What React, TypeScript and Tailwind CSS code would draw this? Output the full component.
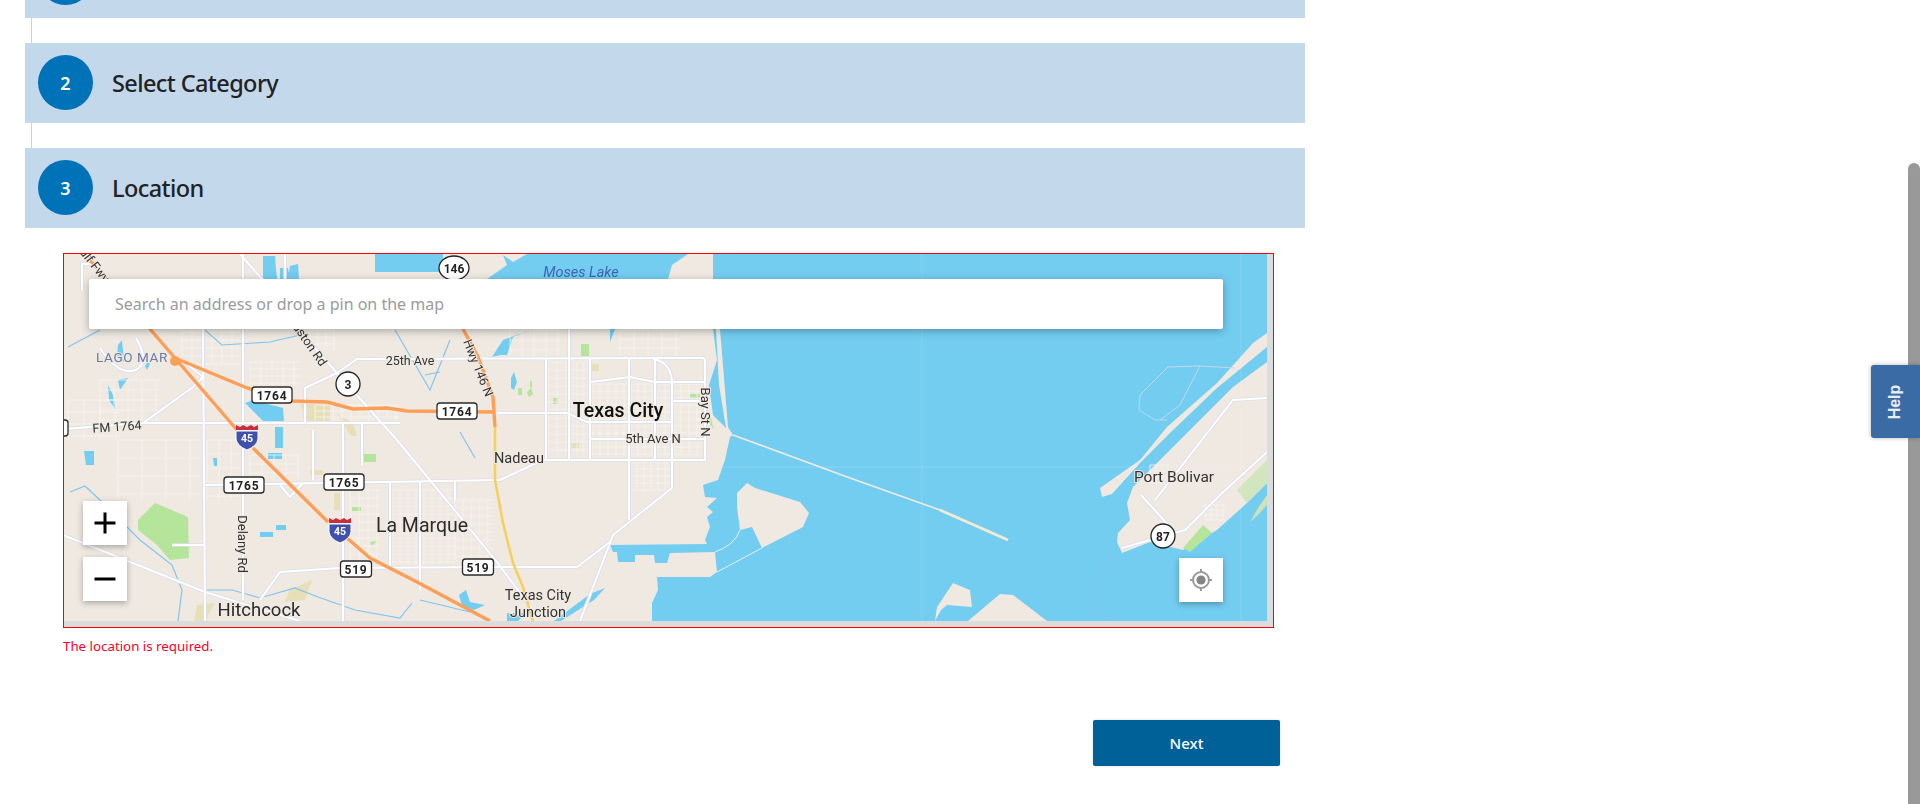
const land = "#efe9e2";
const water = "#73cdf1";

const waterShapes = [
  // bay, coast running top to bottom then along the right edge
  "M713 254 L713 278 L720 329 L725 390 L728 427 L733 435 L730 437 L725 460 L718 480 L703 485 L705 497 L717 498 L707 507 L713 512 L707 517 L710 527 L705 540 L707 544 L610 545 L613 552 L617 552 L618 562 L635 562 L635 555 L654 555 L655 563 L667 563 L670 553 L715 552 L717 572 L710 577 L657 577 L658 590 L652 603 L652 621 L1267 621 L1267 254 Z",
  // Moses Lake
  "M487 279 L507 265 L503 255 L513 262 L527 254 L688 254 L672 265 L668 279 Z",
  "M492 357 L503 340 L533 329 L513 337 L507 355 L500 355 Z",
  "M610 342 L615 329 L610 329 Z",
  "M713 329 L717 360 L709 385 L713 415 L726 428 L719 385 L716 329 Z",
  "M375 254 L443 254 L443 272 L375 272 Z",
  "M263 256 L275 256 L276 270 L278 285 L263 279 Z",
  "M280 268 L288 268 L290 279 L280 279 Z",
  "M290 266 L298 264 L299 279 L288 279 Z",
  "M245 403 L253 400 L283 408 L284 421 L263 421 Z",
  "M275 427 L283 427 L283 448 L275 448 Z",
  "M268 453 L282 453 L282 459 L268 459 Z",
  "M84 451 L94 451 L94 465 L86 465 Z",
  "M213 458 L217 458 L217 466 L214 466 Z",
  "M260 532 L273 532 L273 537 L260 537 Z",
  "M276 525 L286 525 L286 530 L276 530 Z",
  "M118 345 L122 340 L124 362 L117 358 Z",
  "M148 361 L150 364 L147 370 L145 366 Z",
  "M108 385 L113 395 L116 410 L109 400 Z",
  "M118 380 L128 378 L120 390 Z",
  "M459 595 L466 590 L470 602 L485 605 L474 610 L462 606 Z",
  "M605 588 L594 600 L561 621 L554 621 L590 594 Z",
  "M507 613 L527 613 L518 621 L507 621 Z",
  "M511 378 L514 372 L517 382 L514 390 L511 388 Z",
];

const landShapes = [
  "M737 493 L747 483 L755 488 L800 502 L809 513 L803 527 L762 548 L752 527 L740 530 L737 507 Z",
  "M1267 333 L1253 343 L1217 383 L1167 427 L1140 460 L1100 488 L1102 497 L1112 494 L1140 463 L1170 433 L1217 388 L1267 347 Z",
  "M1267 362 L1233 387 L1193 427 L1170 450 L1133 487 L1127 503 L1130 520 L1118 533 L1117 542 L1122 553 L1150 542 L1183 550 L1217 530 L1247 503 L1267 483 Z",
  "M935 621 L937 607 L953 583 L970 590 L972 607 L947 605 L941 610 Z",
  "M968 621 L1000 594 L1013 595 L1047 621 Z",
];

const greens = [
  "M138 520 L155 503 L188 517 L189 558 L170 560 L157 545 L138 530 Z",
  "M581 344 L589 344 L589 356 L581 356 Z",
  "M553 398 L558 398 L558 404 L553 404 Z",
  "M518 388 L522 388 L522 395 L518 395 Z",
  "M530 380 L532 382 L532 388 L530 387 Z",
  "M527 392 L531 388 L533 394 L529 397 Z",
  "M690 394 L700 394 L700 398 L690 398 Z",
  "M709 410 L714 430 L710 424 Z",
  "M363 454 L376 454 L376 462 L363 462 Z",
  "M352 507 L361 507 L361 511 L352 511 Z",
  "M370 542 L377 541 L372 546 Z",
  "M1183 548 L1203 525 L1212 533 L1190 552 Z",
];

const khaki = [
  "M300 404 L330 404 L330 421 L307 421 Z",
  "M337 414 L353 423 L357 436 L351 436 Z",
  "M334 493 L340 493 L340 510 L334 510 Z",
  "M290 590 L312 580 L305 600 L284 602 Z",
  "M197 605 L215 603 L205 621 L194 621 Z",
  "M591 364 L599 364 L599 371 L591 371 Z",
  "M571 443 L579 443 L579 448 L571 448 Z",
  "M310 470 L323 470 L323 475 L310 475 Z",
];

const roads = [
  "M203 329 L205 621",
  "M243 254 L243 600",
  "M63 429 L143 423 L193 387 L203 377 L180 358",
  "M63 535 L205 592 L300 621",
  "M337 373 L357 359 L703 358 Q705 358 705 362 L705 460 L543 460 L500 480 L205 485",
  "M298 329 L337 373 L397 440 L493 557 L533 610",
  "M280 485 L290 497 L303 483",
  "M497 413 L567 413 L587 422 L672 422",
  "M653 359 Q670 362 672 380 L672 488 L613 535 L580 621",
  "M590 358 L590 460",
  "M569 329 L569 460",
  "M546 358 L546 460",
  "M629 358 L629 520",
  "M655 358 L655 460",
  "M590 382 L630 377 L655 382 L705 382",
  "M672 401 L705 401",
  "M590 439 L705 439",
  "M260 600 L280 572 L340 568 L500 567 L577 567 L610 542",
  "M343 423 L343 621",
  "M143 423 L400 423",
  "M313 430 L313 480",
  "M362 423 L362 465",
  "M390 483 L390 568",
  "M420 481 L420 590",
  "M455 480 L455 500",
  "M305 388 L305 423",
  "M305 388 L337 373",
  "M285 310 L285 254 M240 254 L298 320",
  "M205 545 L172 545",
  "M117 300 L96 264 L82 264 L82 290",
  "M100 348 Q118 376 136 370 Q150 362 136 338",
  "M1141 495 L1162 518 L1175 534",
  "M1155 500 L1233 400 L1267 398",
  "M1122 548 L1150 540 L1185 530 L1220 495 L1267 452",
];

const streams = [
  "M68 347 L100 330",
  "M205 330 L222 345 L270 342 L300 335",
  "M395 330 L430 390 L450 340",
  "M425 375 L440 372",
  "M70 492 L85 486 L100 500 L140 540 L172 565 L182 590 L178 621",
  "M205 590 L232 590 L260 598 L295 588 L318 597 L355 610 L400 618 L412 603",
  "M420 600 L470 612",
  "M460 432 L475 458",
  "M1117 553 Q1090 575 1100 610 L1112 621",
];

// block grids: x1, y1, x2, y2, horizontal step, vertical step
const grids = [
  [68, 400, 120, 440, 16, 12],
  [100, 380, 160, 420, 14, 10],
  [118, 440, 200, 500, 24, 18],
  [207, 440, 240, 500, 12, 14],
  [250, 455, 300, 480, 12, 9],
  [350, 490, 380, 560, 9, 8],
  [392, 490, 455, 565, 8, 8],
  [455, 500, 493, 560, 8, 8],
  [548, 362, 567, 455, 9, 8],
  [571, 362, 588, 455, 6, 8],
  [592, 384, 628, 455, 8, 7],
  [631, 384, 653, 455, 7, 7],
  [657, 384, 703, 455, 8, 7],
  [630, 462, 670, 490, 7, 7],
  [510, 330, 560, 356, 12, 10],
  [620, 330, 680, 356, 14, 9],
  [310, 330, 335, 350, 8, 7],
  [182, 332, 240, 365, 10, 8],
  [250, 362, 300, 385, 11, 7],
  [315, 405, 400, 422, 9, 6],
  [1150, 465, 1170, 485, 6, 6],
  [1205, 505, 1225, 520, 6, 5],
];

const blackLabels = [
  { t: "LAGO MAR", x: 132, y: 362, s: 13.5, c: "#6d7ba6", ls: 0.6 },
  { t: "25th Ave", x: 410, y: 365, s: 12.5, c: "#333" },
  { t: "Moses Lake", x: 581, y: 277, s: 14.5, c: "#3f66b4", i: true },
  { t: "Nadeau", x: 519, y: 463, s: 14.5, c: "#333" },
  { t: "5th Ave N", x: 653, y: 443, s: 13, c: "#333" },
  { t: "La Marque", x: 422, y: 532, s: 19.5, c: "#2b2b2b" },
  { t: "Hitchcock", x: 259, y: 616, s: 18.5, c: "#2b2b2b" },
  { t: "Texas City", x: 538, y: 600, s: 14.5, c: "#333" },
  { t: "Junction", x: 538, y: 617, s: 14.5, c: "#333" },
  { t: "Port Bolivar", x: 1174, y: 482, s: 15.5, c: "#333" },
];

const rotatedLabels = [
  { t: "Gulf Fwy", x: 92, y: 262, s: 12.5, r: 52 },
  { t: "Houston Rd", x: 305, y: 338, s: 12.5, r: 55 },
  { t: "Hwy 146 N", x: 478, y: 368, s: 12.5, r: 68 },
  { t: "FM 1764", x: 117, y: 427, s: 12.5, r: -4 },
  { t: "Delany Rd", x: 242, y: 544, s: 13, r: 90 },
  { t: "Bay St N", x: 705, y: 412, s: 13, r: 90 },
];

function RoadBadge({ x, y, label, w = 40 }: { x: number; y: number; label: string; w?: number }) {
  return (
    <g>
      <rect x={x - w / 2} y={y - 8} width={w} height={16} rx={3} fill="#fff" stroke="#2a2a2a" strokeWidth={1.3} />
      <text x={x} y={y + 4.5} textAnchor="middle" fontSize={12} fontWeight={700} letterSpacing={0.8} fill="#222">
        {label}
      </text>
    </g>
  );
}

function RoundBadge({ x, y, label, r = 12 }: { x: number; y: number; label: string; r?: number }) {
  return (
    <g>
      <ellipse cx={x} cy={y} rx={r} ry={12} fill="#fff" stroke="#222" strokeWidth={1.3} />
      <text x={x} y={y + 4.5} textAnchor="middle" fontSize={12} fontWeight={700} fill="#222">
        {label}
      </text>
    </g>
  );
}

function Interstate({ x, y }: { x: number; y: number }) {
  return (
    <g>
      <path
        d={`M${x - 11} ${y - 6} L${x + 11} ${y - 6} L${x + 11} ${y + 2} Q${x + 10} ${y + 9} ${x} ${y + 13} Q${x - 10} ${y + 9} ${x - 11} ${y + 2} Z`}
        fill="#3f51ad"
        stroke="#fff"
        strokeWidth={1}
      />
      <path
        d={`M${x - 11} ${y - 7} L${x - 11} ${y - 12} L${x - 7} ${y - 10} L${x - 4} ${y - 12} L${x} ${y - 10} L${x + 4} ${y - 12} L${x + 7} ${y - 10} L${x + 11} ${y - 12} L${x + 11} ${y - 7} Z`}
        fill="#c8313a"
      />
      <text x={x} y={y + 5} textAnchor="middle" fontSize={10.5} fontWeight={700} fill="#fff">
        45
      </text>
    </g>
  );
}

function StreetMap() {
  return (
    <svg
      width="1203"
      height="367"
      viewBox="64 254 1203 367"
      className="block blur-[0.4px]"
      style={{ fontFamily: "Roboto, sans-serif" }}
    >
      <rect x="64" y="254" width="1203" height="367" fill={land} />
      {waterShapes.map((d) => (
        <path key={d} d={d} fill={water} />
      ))}
      {landShapes.map((d) => (
        <path key={d} d={d} fill={land} />
      ))}
      <path d="M1237 490 L1267 460 L1267 483 L1247 503 Z" fill="#d1e6bf" />
      <path d="M1250 522 L1258 508 L1267 495 L1267 505 L1258 515 Z" fill="#cfe2b7" />
      {khaki.map((d) => (
        <path key={d} d={d} fill="#e6dfb8" />
      ))}
      {greens.map((d) => (
        <path key={d} d={d} fill="#b4e59b" />
      ))}

      {grids.map(([x1, y1, x2, y2, sx, sy]) => {
        const lines = [];
        for (let x = x1; x <= x2; x += sx) lines.push(`M${x} ${y1} L${x} ${y2}`);
        for (let y = y1; y <= y2; y += sy) lines.push(`M${x1} ${y} L${x2} ${y}`);
        return <path key={`${x1}-${y1}`} d={lines.join(" ")} stroke="#f7f4f0" strokeOpacity={0.8} strokeWidth={1} fill="none" />;
      })}

      {streams.map((d) => (
        <path key={d} d={d} stroke="#7fc6ee" strokeWidth={1.2} fill="none" />
      ))}

      {/* tile seams */}
      <path d="M922 254 L922 621 M1241 254 L1241 621 M724 467 L1267 467" stroke="#fff" strokeOpacity={0.16} fill="none" />

      {/* dike, spit and the thin causeways */}
      <path d="M733 435 L850 478 L940 510" stroke="#f1ecdf" strokeWidth={1.6} fill="none" />
      <path d="M940 510 L1008 540" stroke="#f1ebd2" strokeWidth={3} fill="none" />
      <path d="M717 572 L762 548 M715 552 Q735 545 740 530" stroke="#e9eef0" strokeWidth={1} fill="none" />
      <path
        d="M1167 367 L1200 366 L1235 368 M1168 367 L1140 395 L1139 410 L1155 420 L1167 420 M1200 366 L1180 405 L1160 420"
        stroke="#c5d5e6"
        strokeWidth={1}
        fill="none"
      />

      {roads.map((d) => (
        <path key={d} d={d} stroke="#dcdeec" strokeWidth={3.6} fill="none" />
      ))}
      {roads.map((d) => (
        <path key={`${d}-in`} d={d} stroke="#fff" strokeWidth={2} fill="none" />
      ))}

      <path d="M495 427 L495 480 L503 523 L513 563 L523 587 L533 621" stroke="#f5d05f" strokeWidth={2.6} fill="none" />
      <g stroke="#fd9f57" strokeWidth={3.4} fill="none">
        <path d="M88 258 L150 329 L175 358 L237 430" />
        <path d="M253 448 L328 522" />
        <path d="M347 538 L370 558 L417 582 L490 621" />
        <path d="M175 358 L247 388 L290 401 L327 402 L353 409 L387 408 L407 411 L495 412" />
        <path d="M463 329 L478 357 L493 397 L495 427" />
      </g>
      <circle cx="175" cy="361" r="5" fill="#fd9f57" />

      {blackLabels.map((l) => (
        <text
          key={l.t}
          x={l.x}
          y={l.y}
          textAnchor="middle"
          fontSize={l.s}
          fill={l.c}
          fontStyle={l.i ? "italic" : "normal"}
          letterSpacing={l.ls ?? 0}
          stroke={land}
          strokeWidth={l.i ? 0 : 2}
          paintOrder="stroke"
        >
          {l.t}
        </text>
      ))}
      <text x="618" y="417" textAnchor="middle" fontSize={19.5} fontWeight={500} fill="#111" stroke={land} strokeWidth={2} paintOrder="stroke">
        Texas City
      </text>
      {rotatedLabels.map((l) => (
        <text
          key={l.t}
          transform={`translate(${l.x} ${l.y}) rotate(${l.r})`}
          y={4}
          textAnchor="middle"
          fontSize={l.s}
          fill="#333"
          stroke={land}
          strokeWidth={2}
          paintOrder="stroke"
        >
          {l.t}
        </text>
      ))}

      <RoundBadge x={454} y={268} label="146" r={15} />
      <RoundBadge x={348} y={384} label="3" />
      <RoundBadge x={1163} y={536} label="87" />
      <RoadBadge x={272} y={395} label="1764" />
      <RoadBadge x={457} y={411} label="1764" />
      <RoadBadge x={48} y={428} label="1764" />
      <RoadBadge x={244} y={485} label="1765" />
      <RoadBadge x={344} y={482} label="1765" />
      <RoadBadge x={356} y={569} label="519" w={31} />
      <RoadBadge x={478} y={567} label="519" w={31} />
      <Interstate x={247} y={437} />
      <Interstate x={340} y={530} />
    </svg>
  );
}

function StepHeader({ n, title }: { n?: number; title?: string }) {
  return (
    <div className="flex h-[80px] items-center bg-[#c4d8ec] pl-[13px]">
      <div className="mb-[1px] flex h-[55px] w-[55px] shrink-0 items-center justify-center rounded-full bg-[#0072b8] pt-[1px] text-[18px] font-semibold text-white">
        {n}
      </div>
      <h2 className="ml-[19px] pt-[2px] text-[23.5px] font-medium leading-none tracking-[-0.6px] text-[#222]">{title}</h2>
    </div>
  );
}

function Connector() {
  return <div className="ml-[6px] h-[25px] w-[1px] bg-[#d0d0d0]" />;
}

export default function App() {
  return (
    <div className="relative h-[804px] overflow-hidden bg-white font-['Noto_Sans',sans-serif]">
      <div className="ml-[25px] w-[1280px]">
        <div className="h-[18px] overflow-hidden">
          <div className="-mt-[62px]">
            <StepHeader />
          </div>
        </div>
        <Connector />
        <StepHeader n={2} title="Select Category" />
        <Connector />
        <StepHeader n={3} title="Location" />

        <div className="ml-[38px] mt-[25px] w-[1211px]">
          <div className="relative h-[375px] overflow-hidden border border-[#f00] bg-[#dcdcdc]">
            <StreetMap />
            <div className="absolute left-[25px] top-[25px] flex h-[50px] w-[1134px] items-center rounded-[2px] bg-white pl-[26px] text-[16px] text-[#9b9b9b] shadow-[0_2px_8px_rgba(0,0,0,0.3)]">
              Search an address or drop a pin on the map
            </div>
            <div className="absolute left-[19px] top-[247px] flex flex-col gap-[12px]">
              <button className="flex h-[44px] w-[44px] items-center justify-center bg-white shadow-[0_2px_6px_rgba(0,0,0,0.3)]">
                <svg width="22" height="22" viewBox="0 0 22 22">
                  <path d="M0.5 11 H21.5 M11 0.5 V21.5" stroke="#000" strokeWidth="3" />
                </svg>
              </button>
              <button className="flex h-[44px] w-[44px] items-center justify-center bg-white shadow-[0_2px_6px_rgba(0,0,0,0.3)]">
                <svg width="22" height="22" viewBox="0 0 22 22">
                  <path d="M0.5 11 H21.5" stroke="#000" strokeWidth="3" />
                </svg>
              </button>
            </div>
            <button className="absolute left-[1115px] top-[304px] flex h-[44px] w-[44px] items-center justify-center bg-white shadow-[0_2px_6px_rgba(0,0,0,0.3)]">
              <svg width="24" height="24" viewBox="0 0 24 24" fill="none">
                <circle cx="12" cy="12" r="8" stroke="#999" strokeWidth="2" />
                <circle cx="12" cy="12" r="4.6" fill="#858585" />
                <path d="M12 1 V4.5 M12 19.5 V23 M1 12 H4.5 M19.5 12 H23" stroke="#999" strokeWidth="2" />
              </svg>
            </button>
          </div>
          <p className="mt-[9px] text-[13.3px] leading-[18px] text-[#f5002d]">The location is required.</p>
        </div>

        <div className="mt-[65px] flex w-[1255px] justify-end">
          <button className="h-[46px] w-[187px] rounded-[2px] bg-[#006098] text-[15px] font-medium text-white shadow-[0_0_3px_rgba(0,0,0,0.15)]">
            Next
          </button>
        </div>
      </div>

      <div className="absolute bottom-0 right-0 top-[163px] w-[12px] rounded-t-[6px] bg-[#999999]" />
      <div className="absolute right-0 top-[365px] flex h-[73px] w-[49px] items-center justify-center rounded-l-[3px] bg-[#3b6ba5] shadow-[0_0_4px_rgba(0,0,0,0.3)]">
        <span className="-rotate-90 font-['Liberation_Sans',sans-serif] text-[16px] font-bold text-[#e8eef6]">Help</span>
      </div>
    </div>
  );
}
